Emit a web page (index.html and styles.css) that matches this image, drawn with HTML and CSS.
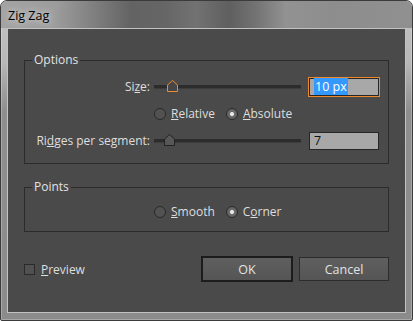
FILE: index.html
```html
<!DOCTYPE html>
<html lang="en">
  <head>
    <meta charset="UTF-8">
    <title>Zig Zag</title>
    <link rel="stylesheet" href="styles.css">
  </head>
  <body>
    <div class="window">
        <div class="titlebar">
            <span class="title">Zig Zag</span>
        </div>

        <div class="client">
            <fieldset class="group">
                <legend>Options</legend>
                <div class="options-grid">
                    <label class="field-label">Si<u>z</u>e:</label>
                    <div class="slider">
                        <div class="track"></div>
                        <svg class="thumb size-thumb" width="11" height="12" viewBox="0 0 11 12">
                            <path d="M0.5 11.5 V5 L5.5 0.5 L10.5 5 V11.5 Z" fill="#474747" stroke="#f08a2c"/>
                        </svg>
                    </div>
                    <div class="input focused"><span class="selected">10 px</span></div>

                    <div class="radio-row">
                        <span class="radio"></span><span class="radio-text"><u>R</u>elative</span>
                        <span class="radio checked"></span><span class="radio-text"><u>A</u>bsolute</span>
                    </div>

                    <label class="field-label">Ri<u>d</u>ges per segment:</label>
                    <div class="slider">
                        <div class="track"></div>
                        <svg class="thumb ridges-thumb" width="11" height="12" viewBox="0 0 11 12">
                            <path d="M0.5 11.5 V5 L5.5 0.5 L10.5 5 V11.5 Z" fill="#575757" stroke="#222"/>
                        </svg>
                    </div>
                    <div class="input">7</div>
                </div>
            </fieldset>

            <fieldset class="group points">
                <legend>Points</legend>
                <div class="radio-row">
                    <span class="radio"></span><span class="radio-text"><u>S</u>mooth</span>
                    <span class="radio checked"></span><span class="radio-text">C<u>o</u>rner</span>
                </div>
            </fieldset>

            <div class="footer">
                <div class="preview">
                    <span class="checkbox"></span><span><u>P</u>review</span>
                </div>
                <div class="buttons">
                    <button class="button default">OK</button>
                    <button class="button">Cancel</button>
                </div>
            </div>
        </div>
    </div>
  </body>
</html>
```

FILE: styles.css
```css
body {
    margin: 0;
    background: #fff;
    font-family: "Open Sans", "Noto Sans", sans-serif;
    font-size: 12px;
    color: #dedede;
}

.window {
    width: 413px;
    height: 321px;
    box-sizing: border-box;
    border: 1px solid #3b3b3b;
    border-radius: 7px 7px 2px 2px;
    background: linear-gradient(180deg, #c4c4c4 0, #b8b8b8 60px, #8e8e8e 110px, #8b8b8b 100%);
    box-shadow: inset 0 0 0 1px rgba(255, 255, 255, 0.25);
    padding: 0 6px 7px;
    display: flex;
    flex-direction: column;
    overflow: hidden;
}

.titlebar {
    height: 27px;
    margin: 0 -6px;
    padding-left: 7px;
    display: flex;
    align-items: center;
    background: linear-gradient(90deg, #a3a3a3 0, #9c9c9c 55px, #7a7a7a 100px, #636363 130px, #666 165px, #727272 195px, #5f5f5f 228px, #737373 255px, #929292 285px, #8d8d8d 330px, #909090 100%);
    border-radius: 6px 6px 0 0;
}

.title {
    color: #000;
    font-size: 12.5px;
    padding-top: 2px;
    text-shadow: 0 0 6px #d8d8d8, 0 0 10px #cfcfcf;
}

.client {
    flex: 1;
    background: #4a4a4a;
    border: 1px solid #c2c2c2;
    padding: 23px 16px 0;
}

.group {
    margin: 0;
    padding: 0 9px 13px 7px;
    border: 1px solid #2b2b2b;
    min-width: 0;
}

.group legend {
    padding: 0 2px;
    line-height: 16px;
    color: #e2e2e2;
}

.options-grid {
    display: grid;
    grid-template-columns: 118px 153px 76px;
    grid-template-rows: 18px 16px 18px;
    row-gap: 10px;
    padding-top: 10px;
    align-items: center;
}

.field-label {
    text-align: right;
    white-space: nowrap;
    line-height: 16px;
}

.slider {
    position: relative;
    height: 18px;
    display: flex;
    align-items: center;
}

.track {
    flex: 1;
    height: 3px;
    margin: 0 2px 0 4px;
    background: #2c2c2c;
    border-bottom: 1px solid #3c3c3c;
}

.thumb {
    position: absolute;
    top: 2px;
}

.size-thumb {
    left: 17px;
}

.ridges-thumb {
    left: 14px;
}

.input {
    height: 18px;
    margin-left: 6px;
    box-sizing: border-box;
    border: 1px solid #262626;
    background: #a8a8a8;
    color: #111;
    padding-left: 4px;
    line-height: 15px;
    font-size: 12.5px;
}

.input.focused {
    box-shadow: 0 0 0 1px #ec8a2c;
}

.selected {
    background: #3399ff;
    color: #fff;
    padding: 0 1px;
}

.radio-row {
    grid-column: 2 / 4;
    display: flex;
    align-items: center;
    height: 16px;
    padding-left: 4px;
}

.radio {
    width: 12px;
    height: 12px;
    box-sizing: border-box;
    border-radius: 50%;
    border: 1px solid #2a2a2a;
    background: #525252;
    margin-right: 5px;
}

.radio.checked {
    background: radial-gradient(circle, #e6e6e6 0, #e6e6e6 1.6px, #6a6a6a 2.4px, #5e5e5e 100%);
}

.radio-text {
    margin-right: 11px;
    line-height: 16px;
}

.points {
    margin-top: 15px;
    padding-bottom: 11px;
}

.points .radio-row {
    padding-top: 9px;
    padding-left: 122px;
}

.footer {
    margin-top: 25px;
    display: flex;
    justify-content: space-between;
    align-items: center;
    height: 24px;
}

.preview {
    display: flex;
    align-items: center;
}

.checkbox {
    width: 11px;
    height: 11px;
    box-sizing: border-box;
    border: 1px solid #2a2a2a;
    background: #515151;
    margin-right: 6px;
}

.buttons {
    display: flex;
    gap: 7px;
}

.button {
    width: 90px;
    height: 24px;
    border: 1px solid #2c2c2c;
    background: linear-gradient(180deg, #5f5f5f, #555);
    color: #e2e2e2;
    font-family: inherit;
    font-size: 12.5px;
    padding: 0;
}

.button.default {
    border-color: #1c1c1c;
    box-shadow: 0 0 0 1px #1c1c1c;
}
```
